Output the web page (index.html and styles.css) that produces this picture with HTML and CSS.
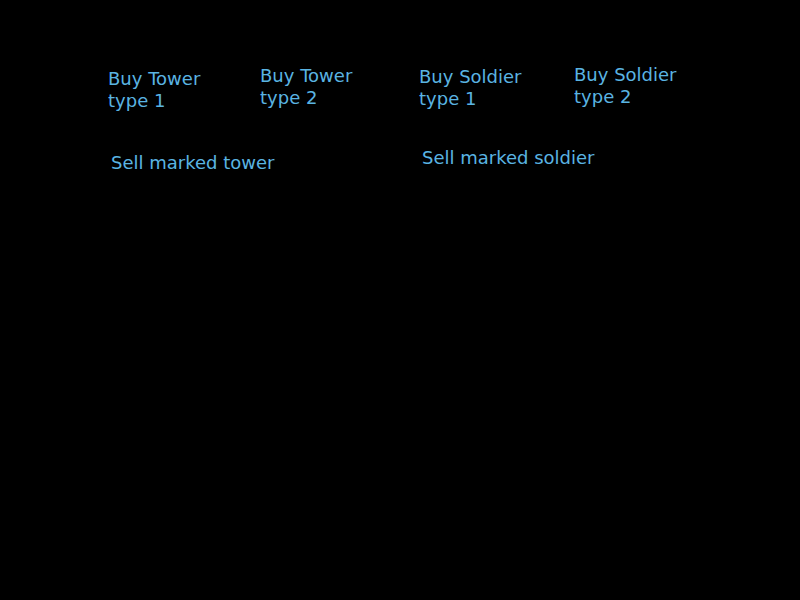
FILE: index.html
```html
<!DOCTYPE html>
<html>
<head>
<meta charset="utf-8">
<title>Shop</title>
<link rel="stylesheet" href="styles.css">
</head>
<body>
<div class="shop">
  <div class="btn b1">Buy Tower type 1</div>
  <div class="btn b2">Buy Tower type 2</div>
  <div class="btn b3">Buy Soldier type 1</div>
  <div class="btn b4">Buy Soldier type 2</div>
  <div class="btn sell s1">Sell marked tower</div>
  <div class="btn sell s2">Sell marked soldier</div>
</div>
</body>
</html>
```
FILE: styles.css
```css
html, body {
  margin: 0;
  padding: 0;
  background: #000;
  width: 800px;
  height: 600px;
  overflow: hidden;
}
.shop {
  display: grid;
  grid-template-columns: 151px 159px 155px 120px;
  row-gap: 35px;
  align-items: start;
  padding: 64px 0 0 108px;
  font-family: "DejaVu Sans", sans-serif;
  font-size: 18px;
  line-height: 22px;
  color: #5ab4e2;
}
.btn {
  max-width: 112px;
}
.sell {
  max-width: none;
  white-space: nowrap;
}
.b1 { margin-top: 4px; }
.b2 { margin-top: 1px; margin-left: 1px; }
.b3 { margin-top: 2px; margin-left: 1px; }
.b4 { margin-top: 0; margin-left: 1px; }
.s1 { grid-column: 1 / 3; margin: 5px 0 0 3px; }
.s2 { grid-column: 3 / 5; margin: 0 0 0 4px; }
```
